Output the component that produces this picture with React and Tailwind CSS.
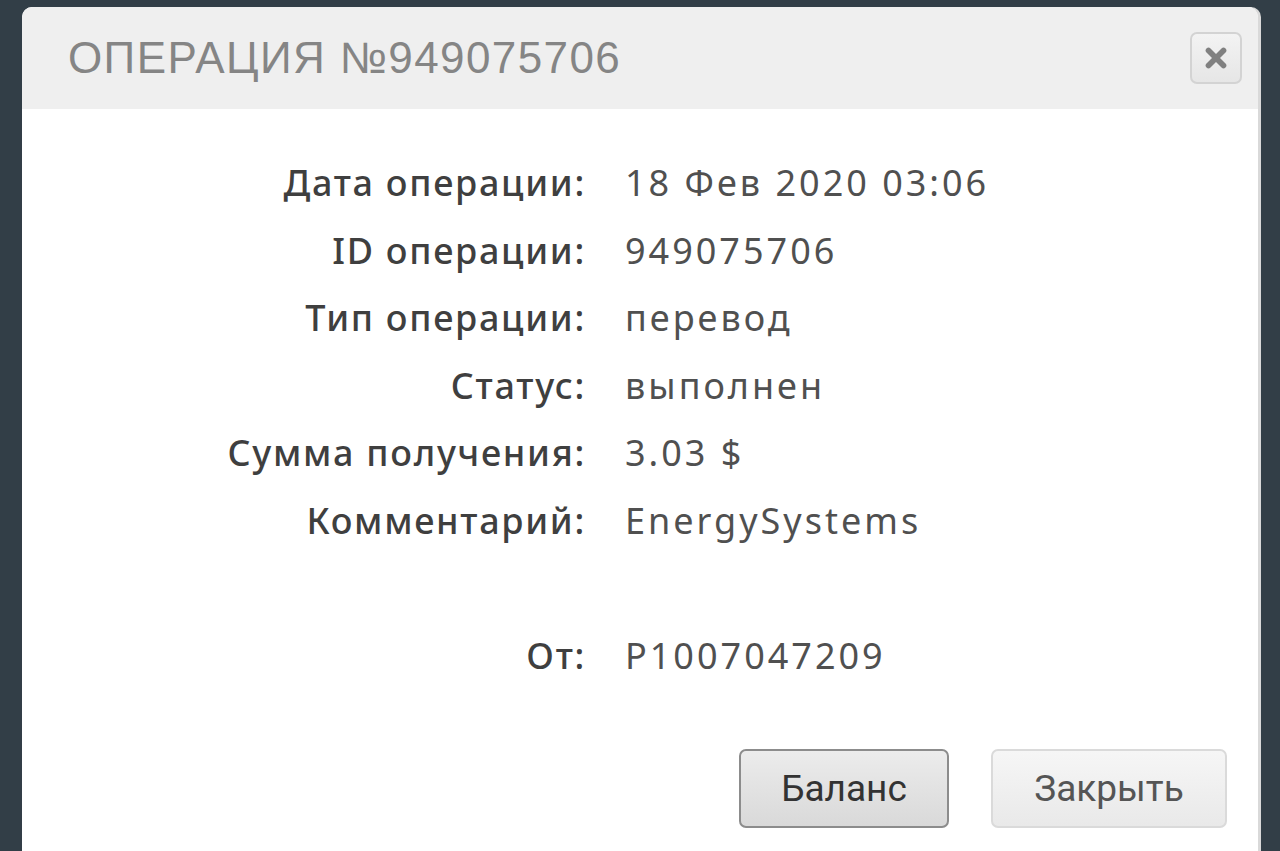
import { X } from 'lucide-react';

const rows = [
  { label: 'Дата операции:', value: '18 Фев 2020 03:06' },
  { label: 'ID операции:', value: '949075706' },
  { label: 'Тип операции:', value: 'перевод' },
  { label: 'Статус:', value: 'выполнен' },
  { label: 'Сумма получения:', value: '3.03 $' },
  { label: 'Комментарий:', value: 'EnergySystems' },
  { label: '', value: '' },
  { label: 'От:', value: 'P1007047209' },
];

export default function App() {
  return (
    <div className="h-[851px] overflow-hidden bg-[#323e47] pt-[7px] pl-[22px] pr-[22px]">
      <div className="h-[900px] rounded-t-[10px] bg-white shadow-[3px_0_0_#d9d9d9] overflow-hidden">
        {/* header */}
        <div className="h-[102px] bg-[#efefef] flex items-center justify-between pl-[46px] pr-[16px]">
          <h1 className="text-[44px] tracking-[1.4px] text-[#858585] font-['Liberation_Sans',sans-serif] leading-none">
            ОПЕРАЦИЯ №949075706
          </h1>
          <button className="w-[52px] h-[52px] rounded-[7px] border-2 border-[#d3d3d3] bg-gradient-to-b from-[#f3f3f3] to-[#e6e6e6] flex items-center justify-center">
            <X className="w-[30px] h-[30px] text-[#808080]" strokeWidth={4.5} />
          </button>
        </div>

        {/* body */}
        <div className="pt-[40px] font-['Noto_Sans',sans-serif] text-[36px] leading-[67.5px]">
          <div className="grid grid-cols-[564px_1fr] gap-x-[39px]">
            {rows.map((r, i) => (
              <div key={i} className="contents">
                <div className="text-right font-medium text-[#3f3f3f] tracking-[1.7px] h-[67.5px]">{r.label}</div>
                <div className="text-[#505050] tracking-[3px] h-[67.5px]">{r.value}</div>
              </div>
            ))}
          </div>

          <div className="flex justify-end gap-[42px] pr-[31px] mt-[60px] font-['Roboto',sans-serif]">
            <button className="w-[210px] h-[79px] rounded-[7px] border-2 border-[#8c8c8c] bg-gradient-to-b from-[#ececec] to-[#d9d9d9] text-[37px] text-[#333] leading-none">
              Баланс
            </button>
            <button className="w-[236px] h-[79px] rounded-[7px] border-2 border-[#dadada] bg-gradient-to-b from-[#f6f6f6] to-[#e9e9e9] text-[37px] text-[#555] leading-none">
              Закрыть
            </button>
          </div>
        </div>
      </div>
    </div>
  );
}
